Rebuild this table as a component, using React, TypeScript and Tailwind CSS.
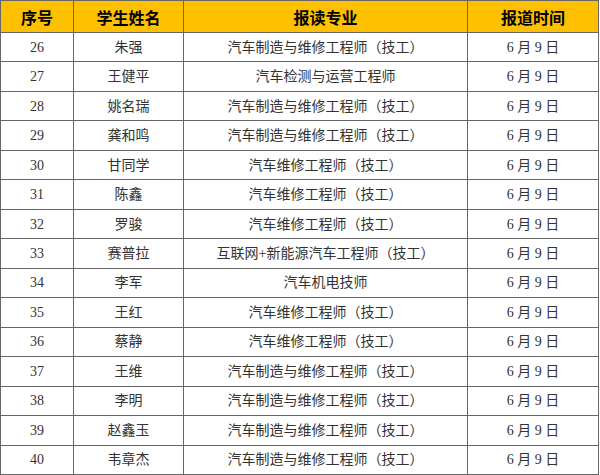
import React from 'react'

const rows = [
  { no: 26, name: '朱强', major: '汽车制造与维修工程师（技工）' },
  { no: 27, name: '王健平', major: '汽车检测与运营工程师' },
  { no: 28, name: '姚名瑞', major: '汽车制造与维修工程师（技工）' },
  { no: 29, name: '龚和鸣', major: '汽车制造与维修工程师（技工）' },
  { no: 30, name: '甘同学', major: '汽车维修工程师（技工）' },
  { no: 31, name: '陈鑫', major: '汽车维修工程师（技工）' },
  { no: 32, name: '罗骏', major: '汽车维修工程师（技工）' },
  { no: 33, name: '赛普拉', major: '互联网+新能源汽车工程师（技工）' },
  { no: 34, name: '李军', major: '汽车机电技师' },
  { no: 35, name: '王红', major: '汽车维修工程师（技工）' },
  { no: 36, name: '蔡静', major: '汽车维修工程师（技工）' },
  { no: 37, name: '王维', major: '汽车制造与维修工程师（技工）' },
  { no: 38, name: '李明', major: '汽车制造与维修工程师（技工）' },
  { no: 39, name: '赵鑫玉', major: '汽车制造与维修工程师（技工）' },
  { no: 40, name: '韦章杰', major: '汽车制造与维修工程师（技工）' },
]

export default function App() {
  return (
    <div className="w-[600px] h-[475px] bg-white overflow-hidden">
      <table className="w-[599px] table-fixed border-collapse text-center">
        <colgroup>
          <col className="w-[73px]" />
          <col className="w-[110px]" />
          <col className="w-[284px]" />
          <col className="w-[131px]" />
        </colgroup>
        <thead>
          <tr className="h-[32px] bg-[#ffc000] text-[16px] font-bold text-black [font-family:'Noto_Sans_CJK_SC',sans-serif]">
            <th className="border border-[#666] p-0">序号</th>
            <th className="border border-[#666] p-0">学生姓名</th>
            <th className="border border-[#666] p-0">报读专业</th>
            <th className="border border-[#666] p-0">报道时间</th>
          </tr>
        </thead>
        <tbody className="text-[14px] text-[#333] [font-family:'Liberation_Serif','Noto_Sans_CJK_SC',serif]">
          {rows.map((r) => (
            <tr key={r.no} className="h-[29.47px]">
              <td className="border border-[#666] p-0">{r.no}</td>
              <td className="border border-[#666] p-0">{r.name}</td>
              <td className="border border-[#666] p-0">{r.major}</td>
              <td className="border border-[#666] p-0">6 月 9 日</td>
            </tr>
          ))}
        </tbody>
      </table>
    </div>
  )
}
